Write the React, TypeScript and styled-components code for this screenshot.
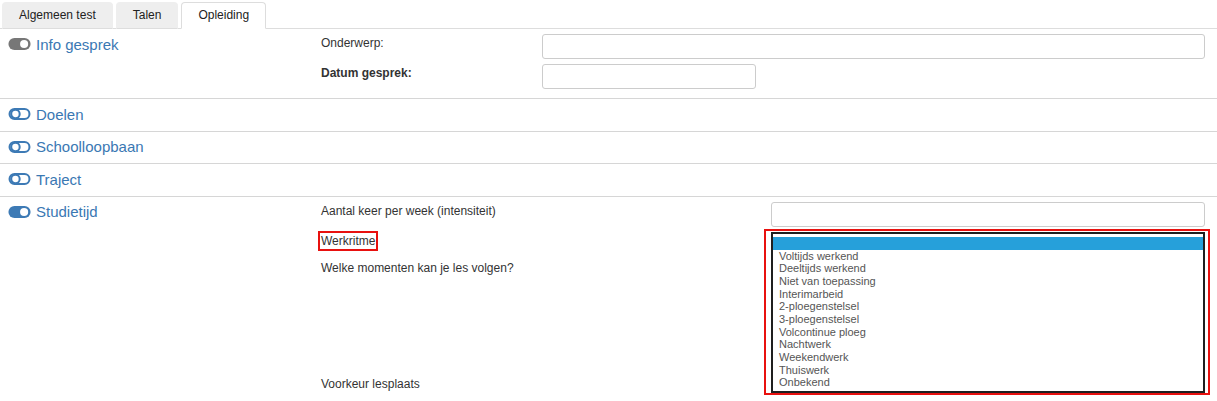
import React from 'react';
import styled, { createGlobalStyle } from 'styled-components';

const GlobalStyle = createGlobalStyle`
    body {
        margin: 0;
        background: #fff;
        font-family: 'Liberation Sans', Arial, sans-serif;
        font-size: 12px;
        color: #333;
    }
`;

const TABS = ['Algemeen test', 'Talen', 'Opleiding'];

const WERKRITME = [
    'Voltijds werkend',
    'Deeltijds werkend',
    'Niet van toepassing',
    'Interimarbeid',
    '2-ploegenstelsel',
    '3-ploegenstelsel',
    'Volcontinue ploeg',
    'Nachtwerk',
    'Weekendwerk',
    'Thuiswerk',
    'Onbekend',
];

type ToggleState = 'disabled' | 'off' | 'on';

const Toggle = ({ state }: { state: ToggleState }): JSX.Element => {
    if (state === 'off') {
        return (
            <SToggleIcon viewBox="0 0 24 13">
                <rect x="1.2" y="1.2" width="21.6" height="10.6" rx="5.3" fill="none" stroke="#3d7ab5" strokeWidth="2.2" />
                <circle cx="7.6" cy="6.5" r="4.6" fill="none" stroke="#3d7ab5" strokeWidth="2.2" />
            </SToggleIcon>
        );
    }
    const fill = state === 'on' ? '#3d7ab5' : '#777';
    return (
        <SToggleIcon viewBox="0 0 24 13">
            <rect x="0" y="0" width="24" height="13" rx="6.5" fill={fill} />
            <circle cx="17" cy="6.5" r="4.4" fill="#fff" />
        </SToggleIcon>
    );
};

const App = (): JSX.Element => {
    return (
        <SPage>
            <GlobalStyle />
            <STabBar>
                {TABS.map((t) => (
                    <STab key={t} active={t === 'Opleiding'}>{t}</STab>
                ))}
            </STabBar>

            <SSection>
                <STitle><Toggle state="disabled" />Info gesprek</STitle>
                <SForm labelWidth={221}>
                    <SLabel>Onderwerp:</SLabel>
                    <SInput type="text" />
                    <SLabel bold>Datum gesprek:</SLabel>
                    <SInput type="text" width={214} />
                </SForm>
            </SSection>

            <SSection collapsed>
                <STitle><Toggle state="off" />Doelen</STitle>
            </SSection>
            <SSection collapsed>
                <STitle><Toggle state="off" />Schoolloopbaan</STitle>
            </SSection>
            <SSection collapsed>
                <STitle><Toggle state="off" />Traject</STitle>
            </SSection>

            <SSection>
                <STitle><Toggle state="on" />Studietijd</STitle>
                <SForm labelWidth={450}>
                    <SLabel>Aantal keer per week (intensiteit)</SLabel>
                    <SInput type="text" />
                    <SLabel><SMarked>Werkritme</SMarked></SLabel>
                    <SSelectCell>
                        <SHighlight>
                            <SListBox>
                                <SOption selected>&nbsp;</SOption>
                                {WERKRITME.map((o) => (
                                    <SOption key={o}>{o}</SOption>
                                ))}
                            </SListBox>
                        </SHighlight>
                    </SSelectCell>
                    <SLabel>Welke momenten kan je les volgen?</SLabel>
                    <SMoments />
                    <SLabel>Voorkeur lesplaats</SLabel>
                    <div />
                </SForm>
            </SSection>
        </SPage>
    );
};

const SPage = styled.div`
    & > div:last-child {
        border-bottom: none;
    }
`;

const STabBar = styled.div`
    display: flex;
    gap: 3px;
    padding: 2px 0 0 2px;
    border-bottom: 1px solid #ddd;
`;

const STab = styled.div<{ active?: boolean }>`
    height: 25px;
    line-height: 25px;
    padding: 0 16px;
    margin-bottom: -1px;
    border: 1px solid ${(p) => (p.active ? '#ddd' : '#eee')};
    border-bottom-color: ${(p) => (p.active ? '#fff' : '#ddd')};
    border-radius: 4px 4px 0 0;
    background: ${(p) => (p.active ? '#fff' : '#eee')};
    color: #222;
    font-size: 12px;
`;

const SSection = styled.div<{ collapsed?: boolean }>`
    display: grid;
    grid-template-columns: 313px 1fr;
    align-items: start;
    padding: 5px 12px ${(p) => (p.collapsed ? '6.5px' : '9px')} 0;
    border-bottom: 1px solid #d6d6d6;
`;

const STitle = styled.div`
    display: flex;
    align-items: center;
    gap: 5px;
    padding-left: 8px;
    height: 20px;
    color: #3a78b3;
    font-size: 15px;
`;

const SToggleIcon = styled.svg`
    width: 23px;
    height: 12px;
    flex-shrink: 0;
`;

const SForm = styled.div<{ labelWidth: number }>`
    display: grid;
    grid-template-columns: ${(p) => p.labelWidth}px 1fr;
    row-gap: 5px;
    padding-left: 8px;
`;

const SLabel = styled.div<{ bold?: boolean }>`
    padding-top: 2px;
    line-height: 14px;
    font-weight: ${(p) => (p.bold ? 'bold' : 'normal')};
    color: #333;
`;

const SMarked = styled.span`
    outline: 2px solid #e8110f;
    outline-offset: 1px;
`;

const SInput = styled.input<{ width?: number }>`
    box-sizing: border-box;
    height: 25px;
    width: ${(p) => (p.width ? `${p.width}px` : '100%')};
    border: 1px solid #ccc;
    border-radius: 3px;
    background: #fff;
`;

const SSelectCell = styled.div`
    position: relative;
    height: 22px;
`;

const SHighlight = styled.div`
    position: absolute;
    z-index: 2;
    top: -3px;
    left: -7px;
    right: -5px;
    border: 2px solid #e8110f;
    padding: 1px 3px 0 5px;
    background: #fff;
`;

const SListBox = styled.div`
    border: 2px solid #1f1f1f;
    padding: 3px 0 2px;
    background: #fff;
`;

const SOption = styled.div<{ selected?: boolean }>`
    height: ${(p) => (p.selected ? '13px' : '12.7px')};
    line-height: 12.7px;
    padding-left: 6px;
    font-size: 11px;
    color: #555;
    background: ${(p) => (p.selected ? '#26a0da' : 'transparent')};
    white-space: nowrap;
`;

const SMoments = styled.div`
    height: 111px;
`;

export default App;
